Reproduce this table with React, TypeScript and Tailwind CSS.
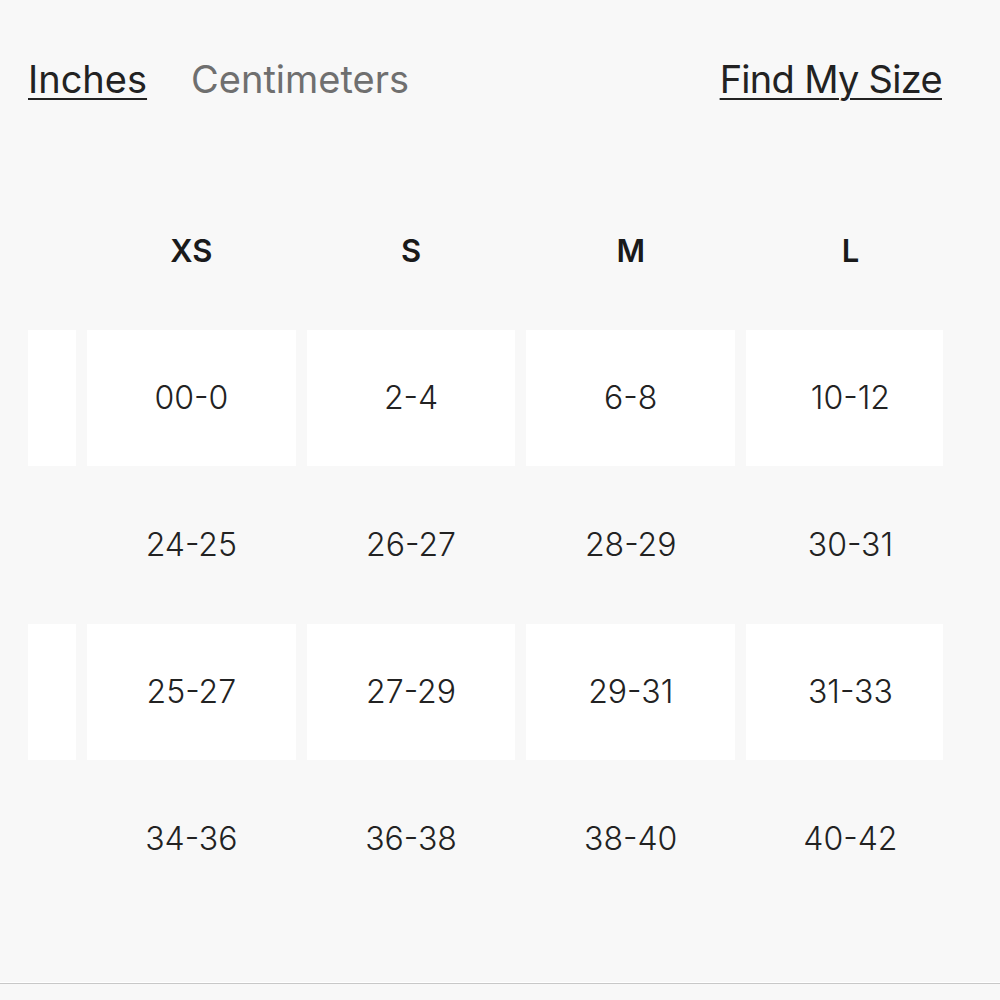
import React from "react";

const sizes = ["XS", "S", "M", "L"];
const rows = [
  { shaded: true, values: ["00-0", "2-4", "6-8", "10-12"] },
  { shaded: false, values: ["24-25", "26-27", "28-29", "30-31"] },
  { shaded: true, values: ["25-27", "27-29", "29-31", "31-33"] },
  { shaded: false, values: ["34-36", "36-38", "38-40", "40-42"] },
];

export default function App() {
  return (
    <div
      className="w-[1000px] h-[1000px] bg-[#f8f8f8] flex flex-col overflow-hidden"
      style={{ fontFamily: "Inter, 'Liberation Sans', sans-serif" }}
    >
      <div className="flex items-center justify-between pl-[28px] pr-[58px] pt-[52px] h-[106px]">
        <div className="flex items-center gap-[44px]">
          <span className="text-[38px] leading-[52px] text-[#222] underline decoration-2 underline-offset-[5px]">
            Inches
          </span>
          <span className="text-[38px] leading-[52px] text-[#6f6f6f]">Centimeters</span>
        </div>
        <span className="text-[38px] leading-[52px] tracking-[-0.7px] text-[#222] underline decoration-2 underline-offset-[5px]">
          Find My Size
        </span>
      </div>

      <div className="ml-[28px] w-[915px] overflow-hidden mt-[77px]">
        <div className="grid grid-cols-[48px_repeat(4,208.7px)] gap-x-[11px] gap-y-[11px] auto-rows-[136px] w-max">
          <div />
          {sizes.map((s) => (
            <div
              key={s}
              className="flex items-center justify-center text-[31px] font-semibold text-[#1a1a1a]"
            >
              {s}
            </div>
          ))}
          {rows.map((r, i) => (
            <React.Fragment key={i}>
              <div className={r.shaded ? "bg-white" : ""} />
              {r.values.map((v) => (
                <div
                  key={v}
                  className={`flex items-center justify-center text-[32px] font-light text-[#222] ${
                    r.shaded ? "bg-white" : ""
                  }`}
                >
                  {v}
                </div>
              ))}
            </React.Fragment>
          ))}
        </div>
      </div>

      <div className="mt-auto mb-[16px] h-[2px] bg-[#c8c8c8] border-t border-white" />
    </div>
  );
}
